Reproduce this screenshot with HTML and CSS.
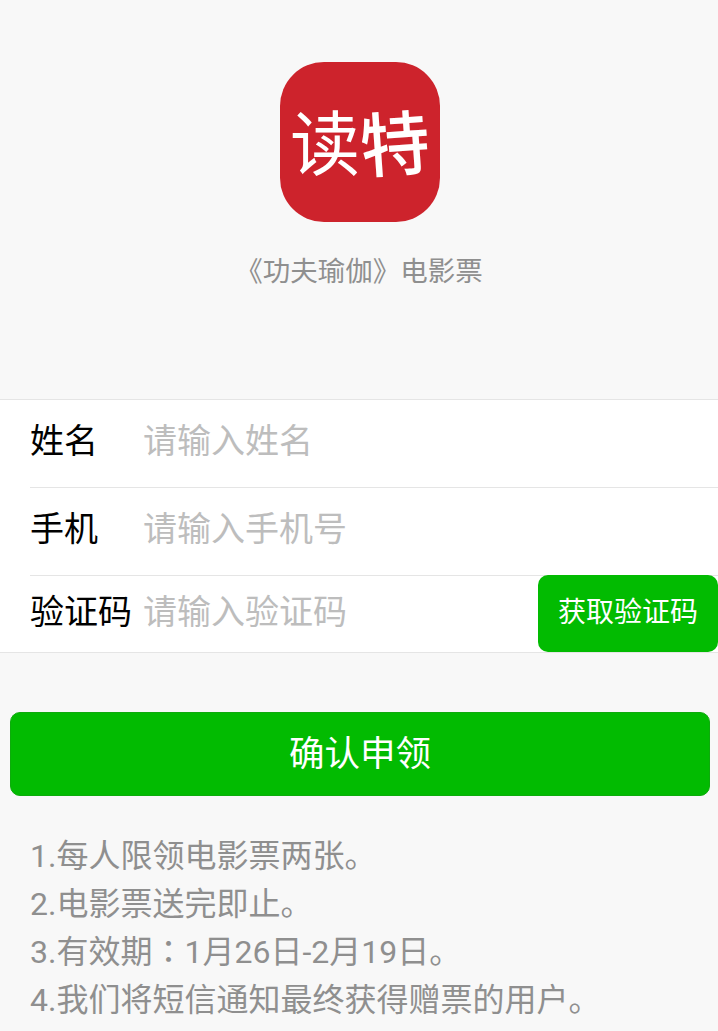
FILE: index.html
```html
<!DOCTYPE html>
<html lang="zh-CN">
<head>
<meta charset="utf-8">
<title>《功夫瑜伽》电影票</title>
<link rel="stylesheet" href="styles.css">
</head>
<body>
<header class="hero">
  <div class="logo"><span class="logo-du">读</span><span class="logo-te">特</span></div>
  <p class="caption">《功夫瑜伽》电影票</p>
</header>
<form class="form">
  <div class="row">
    <span class="label">姓名</span>
    <span class="placeholder">请输入姓名</span>
  </div>
  <div class="row">
    <span class="label">手机</span>
    <span class="placeholder">请输入手机号</span>
  </div>
  <div class="row row-code">
    <span class="label">验证码</span>
    <span class="placeholder">请输入验证码</span>
    <button class="code-btn" type="button">获取验证码</button>
  </div>
</form>
<div class="submit-wrap">
  <button class="submit" type="button">确认申领</button>
</div>
<ol class="notes">
  <li>1.每人限领电影票两张。</li>
  <li>2.电影票送完即止。</li>
  <li>3.有效期<span class="colon" lang="zh-TW">：</span>1月26日-2月19日。</li>
  <li>4.我们将短信通知最终获得赠票的用户。</li>
</ol>
</body>
</html>
```
FILE: styles.css
```css
* { box-sizing: border-box; }

html, body { margin: 0; padding: 0; }

body {
  height: 1031px;
  overflow: hidden;
  background: #f8f8f8;
  font-family: Roboto, "Noto Sans CJK SC", "Noto Sans", sans-serif;
}

.hero {
  display: flex;
  flex-direction: column;
  align-items: center;
  height: 399px;
  padding-top: 62px;
}

.logo {
  display: flex;
  align-items: center;
  justify-content: center;
  width: 160px;
  height: 160px;
  margin-left: 2px;
  padding-top: 8px;
  border-radius: 44px;
  background: #cd232c;
  color: #fff;
  font-size: 70px;
  line-height: 1;
}

.logo-du { font-weight: 400; }

.logo-te { font-weight: 500; transform: rotate(-4deg); }

.caption {
  margin: 31px 0 0;
  font-size: 27.5px;
  line-height: 38px;
  color: #8f8f8f;
}

.form {
  background: #fff;
  border-top: 1px solid #e5e5e5;
  border-bottom: 1px solid #e5e5e5;
  padding-left: 30px;
}

.row {
  display: flex;
  align-items: center;
  height: 88px;
  padding-bottom: 6px;
  border-bottom: 1px solid #e5e5e5;
  font-size: 34px;
}

.row-code {
  position: relative;
  height: 76px;
  padding-bottom: 4px;
  border-bottom: 0;
}

.label {
  flex: none;
  width: 113px;
  color: #000;
  line-height: 1;
}

.placeholder {
  color: #bdbdbd;
  line-height: 1;
}

.code-btn {
  position: absolute;
  right: 0;
  top: -1px;
  width: 180px;
  height: 77px;
  border: 0;
  border-radius: 10px;
  background: #02bb01;
  color: #fff;
  font: inherit;
  font-size: 28px;
  padding: 0 0 8px;
}

.submit-wrap {
  padding: 59px 8px 0 10px;
}

.submit {
  display: block;
  width: 100%;
  height: 84px;
  border: 1px solid #0dab0c;
  border-radius: 10px;
  background: #02bb01;
  color: #fff;
  font: inherit;
  font-size: 35.5px;
  padding: 0 0 8px;
}

.notes {
  list-style: none;
  margin: 0;
  padding: 36px 0 0 30px;
  font-size: 32px;
  line-height: 48px;
  color: #8f8f8f;
}

.notes li { white-space: nowrap; }

/* Traditional-Chinese cut centres the full-width colon in its cell */
.colon { font-family: "Noto Sans CJK TC", sans-serif; line-height: 0; }
```
